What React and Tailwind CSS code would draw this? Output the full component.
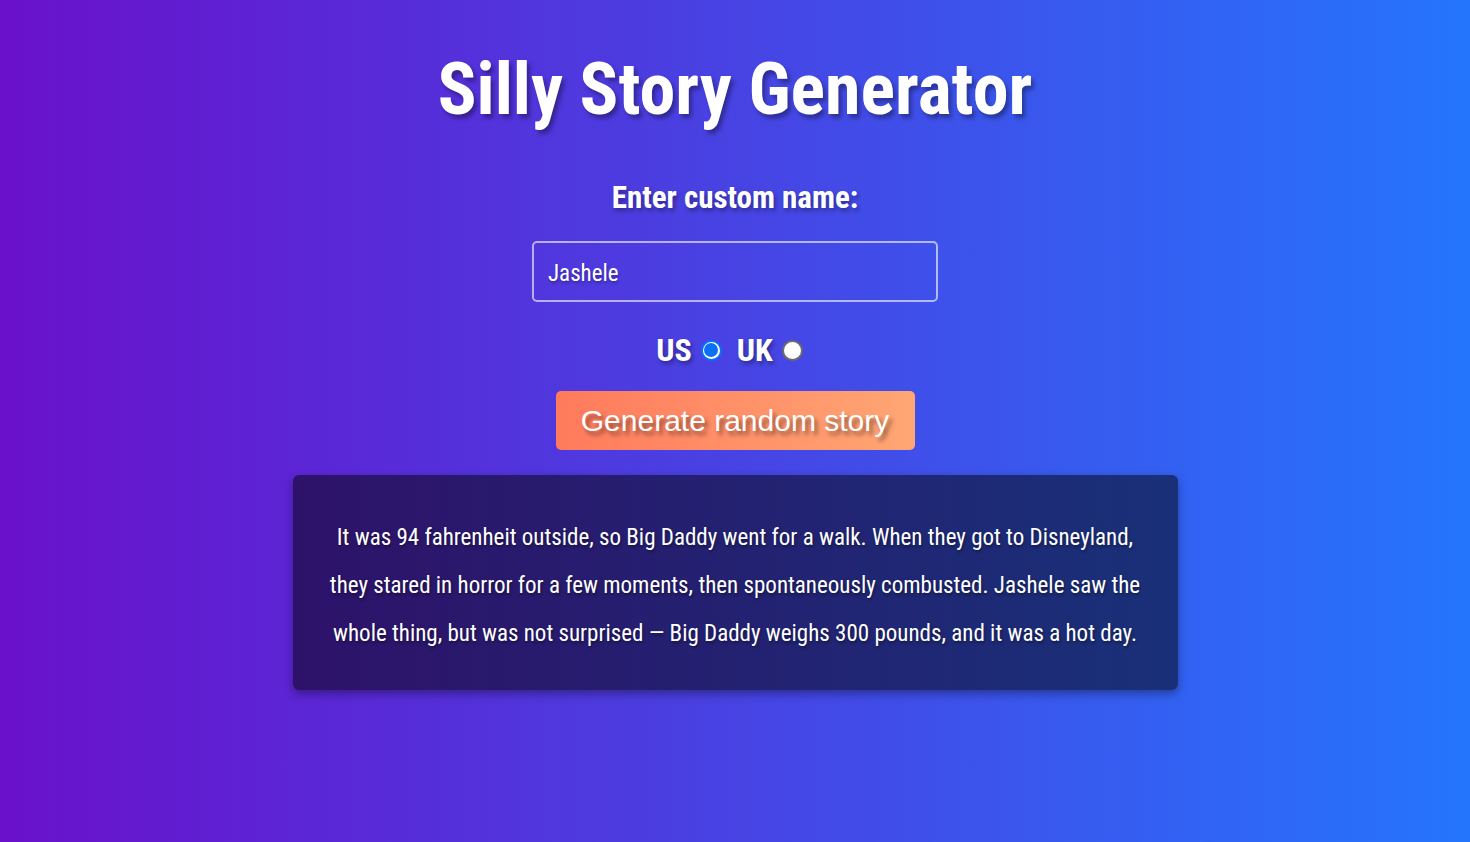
import React, { useState } from 'react';

const dosis = { fontFamily: '"Liberation Sans Narrow", "Roboto Condensed", "DejaVu Sans Condensed", "Open Sans", sans-serif' };

const Radio = ({ checked }) => {
  if (checked) {
    return (
      <span className="flex items-center justify-center w-[21px] h-[21px] rounded-full bg-[#0b6ff7]">
        <span className="flex items-center justify-center w-[17px] h-[17px] rounded-full bg-white">
          <span className="block w-[14px] h-[14px] rounded-full bg-[#0b6ff7]" />
        </span>
      </span>
    );
  }
  return <span className="block w-[21px] h-[21px] rounded-full bg-white border-2 border-[#6b6b6b]" />;
};

export default function App() {
  const [name, setName] = useState('Jashele');

  return (
    <div
      className="min-h-screen w-full bg-linear-to-r/srgb from-[#6a11cb] to-[#2575fc] text-white flex flex-col items-center"
      style={dosis}
    >
      {/* Titre */}
      <h1 className="mt-[48px] text-[72px] leading-[84px] font-bold [text-shadow:3px_4px_4px_rgba(0,0,0,0.35)]">
        Silly Story Generator
      </h1>

      <label className="mt-[48px] text-[31px] leading-[36px] font-bold [text-shadow:2px_3px_4px_rgba(0,0,0,0.35)]">
        Enter custom name:
      </label>

      <input
        value={name}
        onChange={(e) => setName(e.target.value)}
        className="mt-[25px] w-[406px] h-[61px] rounded-[5px] border-2 border-white/60 bg-transparent px-[14px] pt-[3px] text-[23px] text-white outline-none [text-shadow:1px_2px_3px_rgba(0,0,0,0.3)]"
        style={dosis}
      />

      {/* Choix US / UK */}
      <div className="mt-[30px] pr-[11px] flex items-center h-[36px] text-[32px] font-bold [text-shadow:2px_3px_4px_rgba(0,0,0,0.35)]">
        <span>US</span>
        <span className="ml-[9px] mr-[15px]"><Radio checked /></span>
        <span>UK</span>
        <span className="ml-[9px]"><Radio /></span>
      </div>

      <button
        className="mt-[23px] w-[359px] h-[59px] rounded-[5px] bg-linear-to-r/srgb from-[#ff7a5c] to-[#ffa674] text-[30px] text-white [text-shadow:3px_4px_4px_rgba(0,0,0,0.45)]"
        style={{ fontFamily: '"Liberation Sans", Arial, sans-serif' }}
      >
        Generate random story
      </button>

      {/* Histoire */}
      <div className="mt-[25px] w-[885px] h-[215px] rounded-[6px] bg-black/50 shadow-[0_4px_10px_rgba(0,0,0,0.35)] flex items-center justify-center px-[30px] pt-[6px]">
        <p className="text-center text-[23px] leading-[48px] [text-shadow:1px_2px_3px_rgba(0,0,0,0.4)]">
          It was 94 fahrenheit outside, so Big Daddy went for a walk. When they got to Disneyland,<br />
          they stared in horror for a few moments, then spontaneously combusted. Jashele saw the<br />
          whole thing, but was not surprised — Big Daddy weighs 300 pounds, and it was a hot day.
        </p>
      </div>
    </div>
  );
}
